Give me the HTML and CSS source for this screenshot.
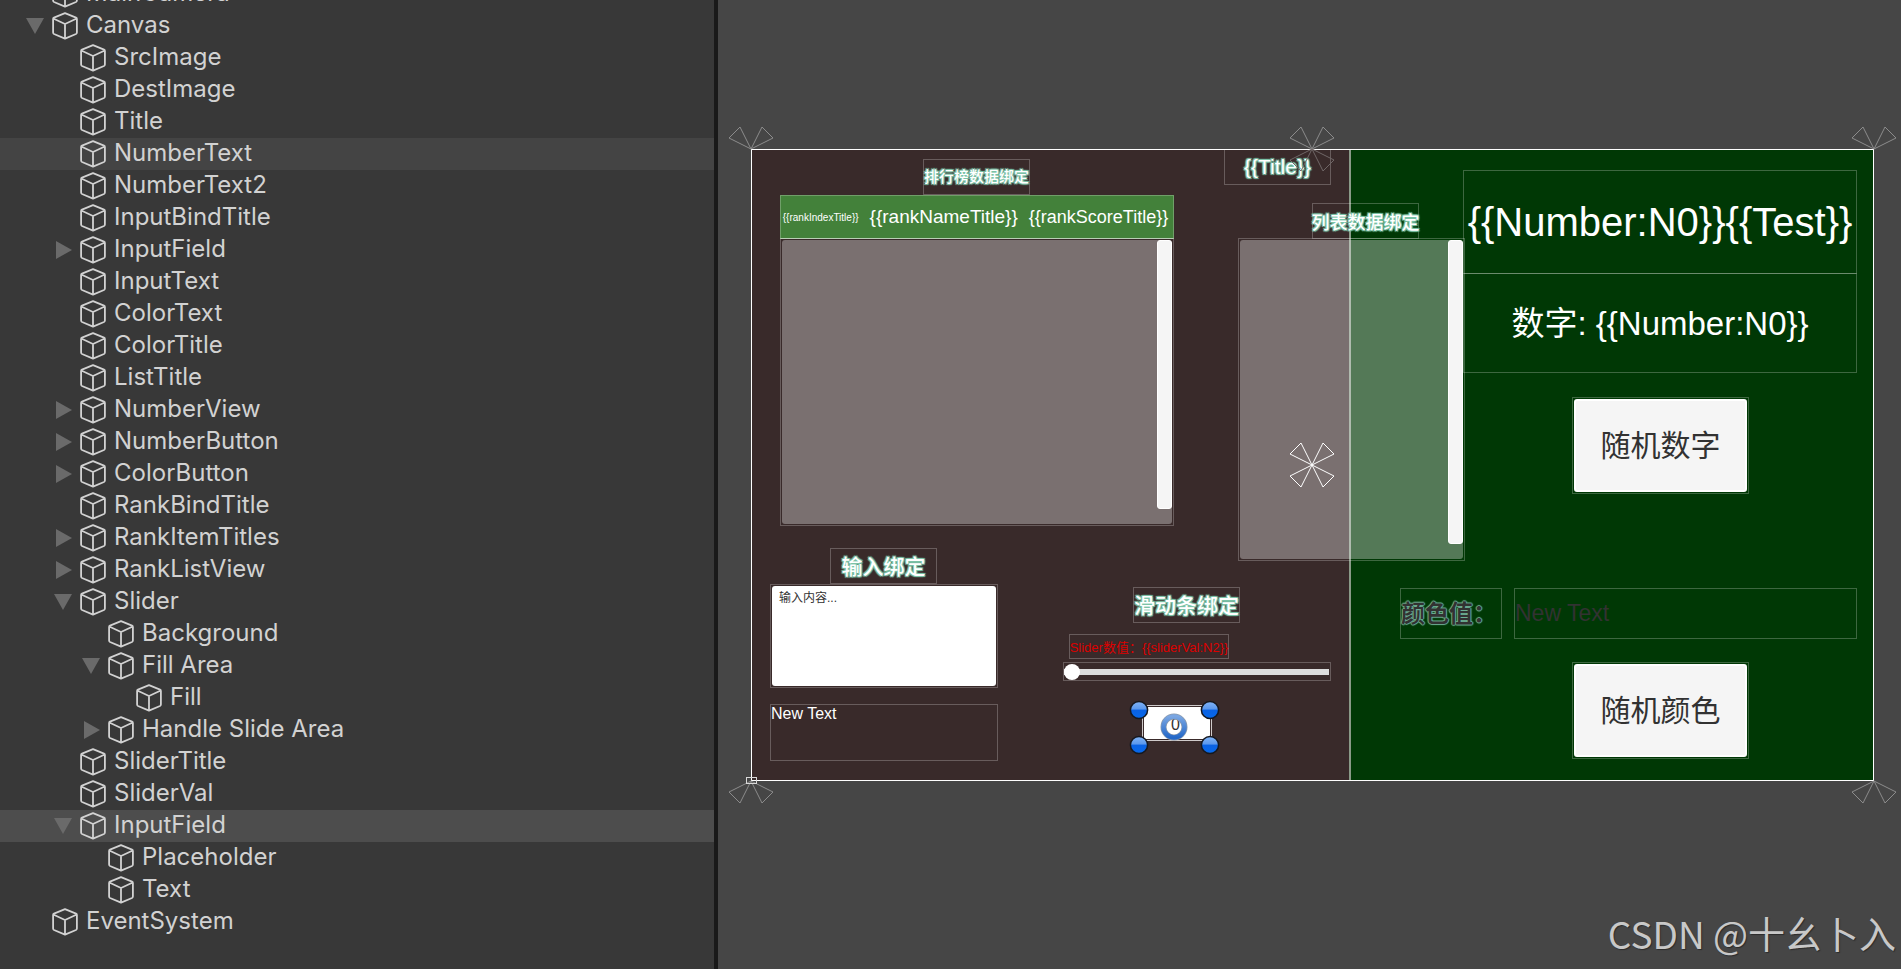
FILE: index.html
```
<!DOCTYPE html>
<html lang="zh-CN">
<head>
<meta charset="utf-8">
<title>Canvas</title>
<link rel="stylesheet" href="styles.css">
</head>
<body>
<svg class="defs" aria-hidden="true">
  <symbol id="cube" viewBox="0 0 26 28"><path d="M13 1.2 L24 5.6 Q24.9 6 24.9 7 L24.9 20.6 Q24.9 21.6 24 22 L13 26.6 L2 22 Q1.1 21.6 1.1 20.6 L1.1 7 Q1.1 6 2 5.6 Z M1.8 6.8 L13 12 L24.2 6.8 M13 12 L13 26.4" fill="none" stroke="#d2d2d2" stroke-width="1.8" stroke-linejoin="round"/></symbol>
  <symbol id="open" viewBox="0 0 18 18"><path d="M0 1H18L9 17Z" fill="#6a6a6a"/></symbol>
  <symbol id="closed" viewBox="0 0 18 18"><path d="M2 0V18L18 9Z" fill="#6a6a6a"/></symbol>
  <symbol id="up" viewBox="0 0 48 48"><path d="M24 24L2 13L13 2ZM24 24L35 2L46 13Z" fill="none" stroke="currentColor"/></symbol>
  <symbol id="down" viewBox="0 0 48 48"><path d="M24 24L2 35L13 46ZM24 24L35 46L46 35Z" fill="none" stroke="currentColor"/></symbol>
</svg>
<div class="editor">
  <nav class="hierarchy" aria-label="Hierarchy">
    <ul class="tree">
      <li class="row l0"><span class="fold"></span><svg class="cube"><use href="#cube"/></svg><span>MainCamera</span></li>
      <li class="row l0"><button class="fold" aria-label="Fold Canvas"><svg><use href="#open"/></svg></button><svg class="cube"><use href="#cube"/></svg><span>Canvas</span></li>
      <li class="row l1"><span class="fold"></span><svg class="cube"><use href="#cube"/></svg><span>SrcImage</span></li>
      <li class="row l1"><span class="fold"></span><svg class="cube"><use href="#cube"/></svg><span>DestImage</span></li>
      <li class="row l1"><span class="fold"></span><svg class="cube"><use href="#cube"/></svg><span>Title</span></li>
      <li class="row l1 hover"><span class="fold"></span><svg class="cube"><use href="#cube"/></svg><span>NumberText</span></li>
      <li class="row l1"><span class="fold"></span><svg class="cube"><use href="#cube"/></svg><span>NumberText2</span></li>
      <li class="row l1"><span class="fold"></span><svg class="cube"><use href="#cube"/></svg><span>InputBindTitle</span></li>
      <li class="row l1"><button class="fold" aria-label="Unfold InputField"><svg><use href="#closed"/></svg></button><svg class="cube"><use href="#cube"/></svg><span>InputField</span></li>
      <li class="row l1"><span class="fold"></span><svg class="cube"><use href="#cube"/></svg><span>InputText</span></li>
      <li class="row l1"><span class="fold"></span><svg class="cube"><use href="#cube"/></svg><span>ColorText</span></li>
      <li class="row l1"><span class="fold"></span><svg class="cube"><use href="#cube"/></svg><span>ColorTitle</span></li>
      <li class="row l1"><span class="fold"></span><svg class="cube"><use href="#cube"/></svg><span>ListTitle</span></li>
      <li class="row l1"><button class="fold" aria-label="Unfold NumberView"><svg><use href="#closed"/></svg></button><svg class="cube"><use href="#cube"/></svg><span>NumberView</span></li>
      <li class="row l1"><button class="fold" aria-label="Unfold NumberButton"><svg><use href="#closed"/></svg></button><svg class="cube"><use href="#cube"/></svg><span>NumberButton</span></li>
      <li class="row l1"><button class="fold" aria-label="Unfold ColorButton"><svg><use href="#closed"/></svg></button><svg class="cube"><use href="#cube"/></svg><span>ColorButton</span></li>
      <li class="row l1"><span class="fold"></span><svg class="cube"><use href="#cube"/></svg><span>RankBindTitle</span></li>
      <li class="row l1"><button class="fold" aria-label="Unfold RankItemTitles"><svg><use href="#closed"/></svg></button><svg class="cube"><use href="#cube"/></svg><span>RankItemTitles</span></li>
      <li class="row l1"><button class="fold" aria-label="Unfold RankListView"><svg><use href="#closed"/></svg></button><svg class="cube"><use href="#cube"/></svg><span>RankListView</span></li>
      <li class="row l1"><button class="fold" aria-label="Fold Slider"><svg><use href="#open"/></svg></button><svg class="cube"><use href="#cube"/></svg><span>Slider</span></li>
      <li class="row l2"><span class="fold"></span><svg class="cube"><use href="#cube"/></svg><span>Background</span></li>
      <li class="row l2"><button class="fold" aria-label="Fold Fill Area"><svg><use href="#open"/></svg></button><svg class="cube"><use href="#cube"/></svg><span>Fill Area</span></li>
      <li class="row l3"><span class="fold"></span><svg class="cube"><use href="#cube"/></svg><span>Fill</span></li>
      <li class="row l2"><button class="fold" aria-label="Unfold Handle Slide Area"><svg><use href="#closed"/></svg></button><svg class="cube"><use href="#cube"/></svg><span>Handle Slide Area</span></li>
      <li class="row l1"><span class="fold"></span><svg class="cube"><use href="#cube"/></svg><span>SliderTitle</span></li>
      <li class="row l1"><span class="fold"></span><svg class="cube"><use href="#cube"/></svg><span>SliderVal</span></li>
      <li class="row l1 selected"><button class="fold" aria-label="Fold InputField"><svg><use href="#open"/></svg></button><svg class="cube"><use href="#cube"/></svg><span>InputField</span></li>
      <li class="row l2"><span class="fold"></span><svg class="cube"><use href="#cube"/></svg><span>Placeholder</span></li>
      <li class="row l2"><span class="fold"></span><svg class="cube"><use href="#cube"/></svg><span>Text</span></li>
      <li class="row l0"><span class="fold"></span><svg class="cube"><use href="#cube"/></svg><span>EventSystem</span></li>
    </ul>
  </nav>
  <main class="scene">
    <div class="board">
      <div class="green"></div>

      <div class="node label rank-title">排行榜数据绑定</div>
      <div class="node rank-head"><span class="index">{{rankIndexTitle}}</span><span class="name">{{rankNameTitle}}</span><span class="score">{{rankScoreTitle}}</span></div>
      <div class="node view rank-view"><div class="panel"><div class="thumb"></div></div></div>

      <div class="node label title">{{Title}}</div>
      <div class="node view list-view"><div class="panel"><div class="thumb"></div></div></div>
      <div class="node label list-title">列表数据绑定</div>

      <div class="node number">{{Number:N0}}{{Test}}</div>
      <div class="node number2">数字: {{Number:N0}}</div>
      <div class="node push random-number"><button>随机数字</button></div>

      <label class="node label input-title" for="content">输入绑定</label>
      <div class="node field"><textarea id="content" placeholder="输入内容..."></textarea></div>
      <div class="node input-text">New Text</div>

      <label class="node label slider-title" for="slider">滑动条绑定</label>
      <div class="node slider-val">Slider数值：{{sliderVal:N2}}</div>
      <div class="node slider"><input id="slider" type="range" min="0" max="100" value="0"></div>

      <div class="node color-title">颜色值：</div>
      <div class="node color-text">New Text</div>
      <div class="node push random-color"><button>随机颜色</button></div>

      <div class="node picked">
        <input type="text" value="0" aria-label="InputField">
        <svg class="grips" viewBox="0 0 96 60">
          <defs>
            <linearGradient id="ball" x1="0" y1="0" x2="0" y2="1"><stop offset="0" stop-color="#82b4f6"/><stop offset=".45" stop-color="#5a98ee"/><stop offset=".5" stop-color="#0a62e4"/><stop offset="1" stop-color="#0668ea"/></linearGradient>
            <linearGradient id="ring" x1="0" y1="0" x2="0" y2="1"><stop offset="0" stop-color="#7aa6e2"/><stop offset="1" stop-color="#2468c8"/></linearGradient>
          </defs>
          <circle cx="47" cy="29" r="10.5" fill="none" stroke="#8b9aad" stroke-width="6"/>
          <circle cx="47" cy="29" r="10.5" fill="none" stroke="url(#ring)" stroke-width="4.5"/>
          <g fill="url(#ball)" stroke="#15181f" stroke-width="1.5"><circle cx="12" cy="12" r="8.6"/><circle cx="83" cy="12" r="8.6"/><circle cx="12" cy="47" r="8.6"/><circle cx="83" cy="47" r="8.6"/></g>
        </svg>
      </div>

      <svg class="anchor top left"><use href="#up"/></svg>
      <svg class="anchor top middle"><use href="#up"/></svg>
      <svg class="anchor top middle faint"><use href="#down"/></svg>
      <svg class="anchor top right"><use href="#up"/></svg>
      <svg class="anchor bottom left"><use href="#down"/></svg>
      <svg class="anchor bottom right"><use href="#down"/></svg>
      <svg class="anchor center middle"><use href="#up"/><use href="#down"/></svg>
      <div class="pivot"></div>
    </div>
    <div class="watermark">CSDN @十幺卜入</div>
  </main>
</div>
</body>
</html>
```
FILE: styles.css
```
* { box-sizing: border-box; }

body {
  margin: 0;
  background: #464646;
  font-family: "Liberation Sans", "Noto Sans CJK SC", sans-serif;
}

button, input, textarea { font: inherit; }

.defs { position: absolute; width: 0; height: 0; }

.editor {
  display: flex;
  height: 100vh;
  overflow: hidden;
}

/* Hierarchy */
.hierarchy {
  flex: 0 0 718px;
  border-right: 4px solid #191919;
  background: #383838;
  overflow: hidden;
}

.tree {
  margin: -22px 0 0;
  padding: 0;
  list-style: none;
  font: 24px/30px Inter, sans-serif;
  color: #d2d2d2;
}

.row {
  display: flex;
  align-items: center;
  height: 32px;
  padding-left: 26px;
}

.row > span:last-child { padding-bottom: 3px; }

.l1 { padding-left: 54px; }
.l2 { padding-left: 82px; }
.l3 { padding-left: 110px; }
.hover { background: #444; }
.selected { background: #4d4d4d; }

.fold {
  width: 18px;
  height: 18px;
  margin-right: 8px;
  padding: 0;
  border: 0;
  background: none;
}

.fold svg { display: block; width: 18px; height: 18px; }
.cube { width: 26px; height: 28px; margin-right: 8px; }

/* Scene */
.scene {
  flex: 1;
  min-width: 0;
  position: relative;
  padding: 149px 27px 0 33px;
}

.board {
  position: relative;
  height: 632px;
  border: 1px solid #fff;
  background: #392a2a;
}

.green {
  position: absolute;
  inset: 0 0 0 597px;
  border-left: 2px solid #8a9a88;
  background: #003805;
}

.node {
  position: absolute;
  display: flex;
  align-items: center;
  justify-content: center;
  border: 1px solid rgba(255, 255, 255, .24);
  color: #fff;
  white-space: nowrap;
}

.label {
  height: 36px;
  width: 107px;
  padding-bottom: 3px;
  font-size: 21px;
  font-weight: 500;
  text-shadow: 1px 1px 1px #7cc4a8, -1px -1px 1px #7cc4a8, 1px -1px 1px #7cc4a8, -1px 1px 1px #7cc4a8;
}

.rank-title { left: 171px; top: 9px; font-size: 15px; }
.title { left: 472px; top: -1px; padding-bottom: 0; }
.list-title { left: 560px; top: 53px; font-size: 18px; padding-bottom: 1px; }
.input-title { left: 78px; top: 398px; }
.slider-title { left: 381px; top: 437px; }

.rank-head {
  left: 28px;
  top: 45px;
  width: 394px;
  height: 44px;
  padding-right: 3px;
  gap: 11px;
  background: #43813a;
  border-bottom-color: #a4bf9e;
}

.index { font-size: 10px; }
.name { font-size: 19px; }
.score { font-size: 18px; }

.view { padding: 1px; align-items: stretch; }
.rank-view { left: 28px; top: 88px; width: 394px; height: 288px; }
.list-view { left: 486px; top: 88px; width: 227px; height: 323px; }

.panel {
  flex: 1;
  display: flex;
  justify-content: flex-end;
  padding-bottom: 15px;
  border-radius: 3px;
  background: rgba(255, 255, 255, .33);
}

.thumb {
  width: 15px;
  border: 1px solid #fff;
  border-radius: 3px;
  background: #f5f5f5;
}

.number, .number2 { right: 16px; width: 394px; }
.number { top: 20px; height: 104px; font-size: 40px; }
.number2 { top: 123px; height: 100px; padding-bottom: 4px; font-size: 33px; }

.push { right: 124px; width: 177px; height: 97px; padding: 1px; }
.random-number { top: 247px; }
.random-color { top: 512px; }

.push button {
  flex: 1;
  align-self: stretch;
  padding: 0 0 5px;
  border: 2px solid #fff;
  border-radius: 3px;
  background: #f5f5f5;
  color: #323232;
  font-size: 30px;
}

.field { left: 18px; top: 434px; width: 228px; height: 104px; padding: 1px; }

.field textarea {
  flex: 1;
  align-self: stretch;
  padding: 2px 7px;
  border: 0;
  border-radius: 3px;
  background: #fff;
  resize: none;
  font-size: 12px;
  color: #323232;
}

.field textarea::placeholder { color: #323232; }

.input-text {
  left: 18px;
  top: 554px;
  width: 228px;
  height: 57px;
  align-items: flex-start;
  justify-content: flex-start;
  font-size: 16px;
}

.slider-val {
  left: 317px;
  top: 484px;
  width: 160px;
  height: 25px;
  padding-bottom: 1px;
  font-size: 13px;
  color: #dc0000;
}

.slider { left: 311px; top: 512px; width: 268px; height: 19px; padding: 0 1px 0 0; }

.slider input {
  flex: 1;
  height: 16px;
  margin: 0;
  appearance: none;
  background: linear-gradient(#ddd, #ddd) center / 100% 6px no-repeat;
  border-radius: 3px;
}

.slider input::-webkit-slider-thumb {
  appearance: none;
  width: 16px;
  height: 16px;
  border-radius: 50%;
  background: #fff;
}

.color-title, .color-text {
  top: 438px;
  height: 51px;
  justify-content: flex-start;
  color: #323232;
}

.color-title {
  right: 371px;
  width: 102px;
  padding-bottom: 4px;
  font-size: 24px;
  font-weight: 700;
  text-shadow: 1px 0 1px #6fae96, -1px 0 1px #6fae96, 0 1px 1px #6fae96, 0 -1px 1px #6fae96;
}

.color-text { right: 16px; width: 343px; font-size: 23px; }

.picked { left: 390px; top: 555px; width: 70px; height: 36px; border-color: #cfcaca; }

.picked input {
  width: 100%;
  height: 100%;
  padding: 4px 3px 0 0;
  border: 1px solid #392a2a;
  background: #fff;
  color: #323232;
  font-size: 16px;
  text-align: center;
}

.grips {
  position: absolute;
  left: -16px;
  top: -8px;
  width: 96px;
  height: 60px;
}

/* Anchor handles lie over the canvas edges */
.anchor {
  position: absolute;
  width: 48px;
  height: 48px;
  color: #8c8c8c;
}

.left { left: -25px; }
.middle { left: calc(50% - 25px); }
.right { right: -25px; }
.top { top: -25px; }
.bottom { bottom: -25px; }
.center { top: calc(50% - 24px); color: #fff; }
.faint { color: #6f6666; }

.pivot {
  position: absolute;
  left: -6px;
  bottom: -4px;
  width: 11px;
  height: 7px;
  border: 1px solid #d8d8d8;
}

.watermark {
  position: absolute;
  right: 5px;
  bottom: 9px;
  font: 37px/54px "Noto Sans CJK SC", sans-serif;
  color: #c8c8c8;
  text-shadow: 1px 1px 1px #2c2c2c;
}
```
